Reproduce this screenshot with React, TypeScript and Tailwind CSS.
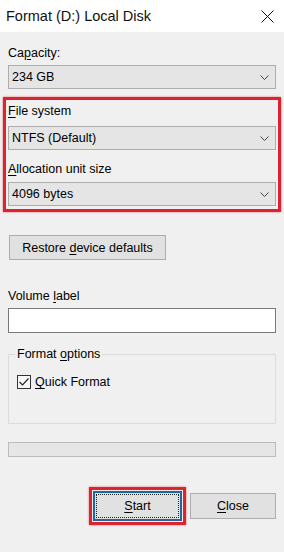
import React from 'react';

const Chevron: React.FC = () => (
    <svg width="9" height="5" viewBox="0 0 9 5" fill="none" stroke="#444" strokeWidth="1">
        <polyline points="0.5 0.5 4.5 4.5 8.5 0.5" />
    </svg>
);

const CloseIcon: React.FC = () => (
    <svg width="13" height="13" viewBox="0 0 13 13" fill="none" stroke="#111" strokeWidth="1">
        <line x1="0.5" y1="0.5" x2="12.5" y2="12.5" />
        <line x1="12.5" y1="0.5" x2="0.5" y2="12.5" />
    </svg>
);

const Dropdown: React.FC<{ value: string; className?: string }> = ({ value, className }) => (
    <div className={`h-[24px] flex items-center justify-between bg-[#e5e5e5] border border-[#adadad] pl-[3px] pr-[6px] ${className ?? ''}`}>
        <span>{value}</span>
        <Chevron />
    </div>
);

const Key: React.FC<{ children: React.ReactNode }> = ({ children }) => <span className="underline underline-offset-2">{children}</span>;

export default function App() {
    return (
        <div className="w-[284px] h-[552px] overflow-hidden bg-[#f0f0f0] text-black text-[12.5px] leading-[16px] font-['Liberation_Sans',Arial,sans-serif]">
            <div className="h-[32px] bg-white flex items-center justify-between pl-[6px] pr-[10px]">
                <span className="text-[14.5px] text-[#111]">Format (D:) Local Disk</span>
                <CloseIcon />
            </div>

            <div className="px-[8px]">
                <div className="mt-[13px]">Ca<Key>p</Key>acity:</div>
                <Dropdown value="234 GB" className="mt-[4px]" />

                <div className="-mx-[5px] mt-[8px] border-[3px] border-[#dc2430] px-[2px] pt-[3px] pb-[3px] shadow-[0_0_2px_#e86b70]">
                    <div><Key>F</Key>ile system</div>
                    <Dropdown value="NTFS (Default)" className="mt-[7px]" />
                    <div className="mt-[11px]"><Key>A</Key>llocation unit size</div>
                    <Dropdown value="4096 bytes" className="mt-[5px]" />
                </div>

                <button className="mt-[23px] ml-[1px] w-[157px] h-[25px] bg-[#e1e1e1] border border-[#adadad] flex items-center justify-center">
                    <span>Restore <Key>d</Key>evice defaults</span>
                </button>

                <div className="mt-[28px]">Volume <Key>l</Key>abel</div>
                <div className="mt-[4px] h-[25px] bg-white border border-[#7a7a7a]" />

                <fieldset className="mt-[13px] border border-[#dcdcdc] pb-[33px]">
                    <legend className="ml-[6px] px-[2px] leading-[16px]">Format <Key>o</Key>ptions</legend>
                    <div className="mt-[12px] ml-[8px] flex items-center gap-[4px] h-[16px]">
                        <span className="w-[14px] h-[14px] border border-[#333] bg-[#f7f7f7] flex items-center justify-center">
                            <svg width="10" height="8" viewBox="0 0 10 8" fill="none" stroke="#222" strokeWidth="1.2">
                                <polyline points="0.5 4 3.5 7 9.5 0.5" />
                            </svg>
                        </span>
                        <span><Key>Q</Key>uick Format</span>
                    </div>
                </fieldset>

                <div className="mt-[18px] h-[15px] bg-[#e6e6e6] border border-[#bcbcbc]" />

                <div className="mt-[30px] flex justify-end items-center gap-[4px]">
                    <div className="border-[3px] border-[#dc2430] p-[1px] shadow-[0_0_2px_#e86b70]">
                        <button className="w-[89px] h-[30px] bg-[#e1e1e1] border-2 border-[#26649e] flex">
                            <span className="flex-1 m-[1px] border border-dotted border-[#222] flex items-center justify-center">
                                <span><Key>S</Key>tart</span>
                            </span>
                        </button>
                    </div>
                    <button className="w-[86px] h-[26px] bg-[#e1e1e1] border border-[#adadad] flex items-center justify-center">
                        <span><Key>C</Key>lose</span>
                    </button>
                </div>
            </div>
        </div>
    );
}
